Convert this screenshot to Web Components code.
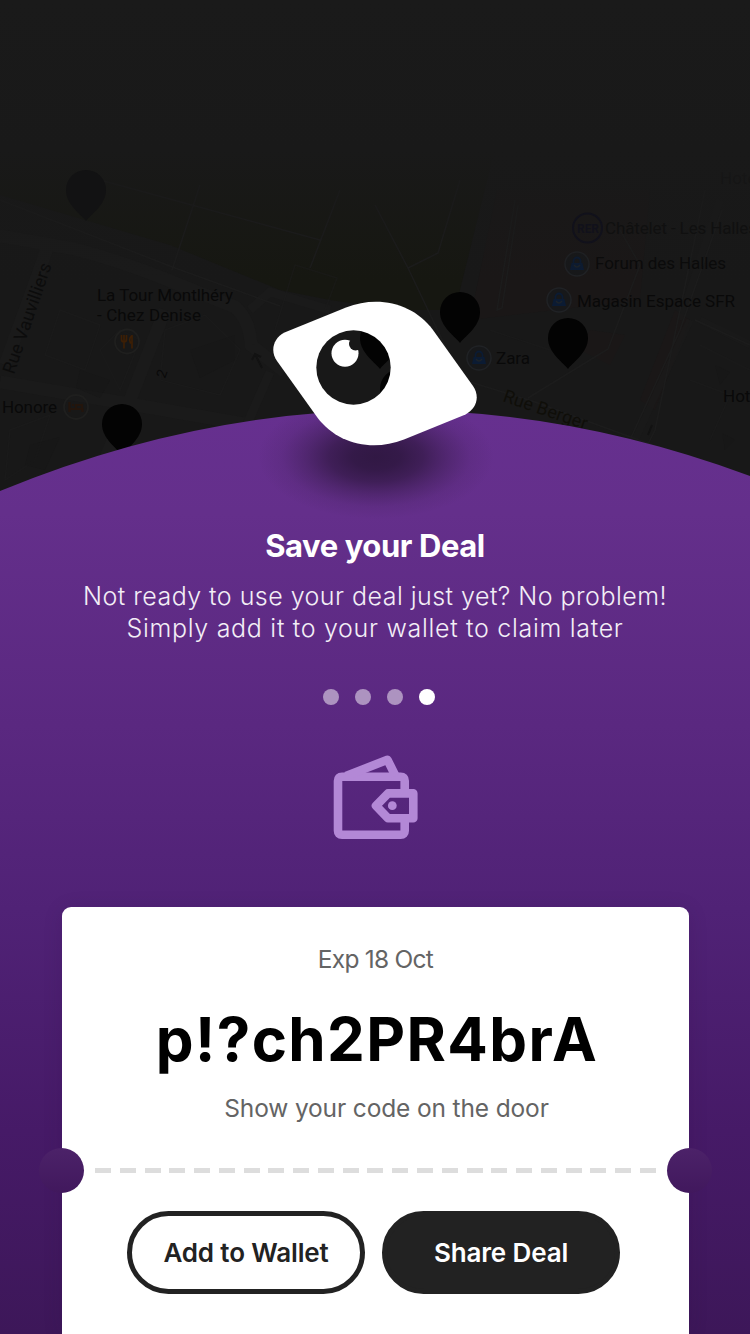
<!DOCTYPE html>
<html lang="en"><head><meta charset="utf-8"><title>Save your Deal</title>
<style>html,body{margin:0;background:#191919}body{font-family:Inter,"Liberation Sans",sans-serif;width:750px;height:1334px;overflow:hidden}</style></head>
<body>
<deal-screen>
  <deal-logo></deal-logo>
  <deal-intro>
    <span slot="title">Save your Deal</span>
    <span slot="line1">Not ready to use your deal just yet? No problem!</span>
    <span slot="line2">Simply add it to your wallet to claim later</span>
  </deal-intro>
  <page-dots count="4" active="4"></page-dots>
  <wallet-icon></wallet-icon>
  <deal-ticket>
    <span slot="expiry">Exp 18 Oct</span>
    <span slot="code">p!?ch2PR4brA</span>
    <span slot="hint">Show your code on the door</span>
    <pill-button slot="actions">Add to Wallet</pill-button>
    <pill-button slot="actions" solid>Share Deal</pill-button>
  </deal-ticket>
</deal-screen>
<script>
const define = (name, html, init) => customElements.define(name, class extends HTMLElement {
  constructor() { super(); this.attachShadow({mode: 'open'}).innerHTML = html; }
  connectedCallback() { if (init) init(this, this.shadowRoot); }
});

define('city-map', `<style>:host{display:block}svg{display:block}text{font-family:Roboto,sans-serif;font-size:17px;fill:#090909}</style>
<svg width="750" height="500" viewBox="0 0 750 500">
  <defs>
    <path id="pin" d="M0 0C-4 -6 -20 -16 -20 -31A20 20 0 0 1 20 -31C20 -16 4 -6 0 0Z"/>
    <g id="bag"><circle r="12" fill="#17181a" stroke="#202225" stroke-width="1.5"/><path d="M-5.500 -1H5.500L7 6H-7Z" fill="#0b1b33"/><path d="M-3.500 -1V-3A3.500 3.500 0 0 1 3.500 -3V-1" fill="none" stroke="#0b1b33" stroke-width="1.800"/><path d="M-3 1Q0 5 3 1" fill="none" stroke="#1d2329" stroke-width="1.300"/></g>
    <linearGradient id="fade" x2="0" y2="1"><stop offset="0" stop-color="#1a1a1a"/><stop offset=".3" stop-color="#191919"/><stop offset=".56" stop-color="#191919" stop-opacity="0"/></linearGradient>
  </defs>
  <rect width="750" height="500" fill="#181818"/>
  <path d="M0 140H497L455 310L400 310L330 300L280 290L170 245L0 195Z" fill="#161711"/>
  <path d="M497 190H650L640 300L470 320ZM590 330L625 335L610 365L580 350ZM675 310L690 320L655 410L640 400Z" fill="#1a1717"/>
  <g fill="none" stroke="#1a1a1a">
    <path d="M-5 235L70 248Q120 260 180 285L235 307Q250 320 251 345L285 372M50 240L36 280L5 365M0 382L130 404L250 425M165 310L130 400L105 460" stroke-width="13"/>
    <path d="M270 372L240 440M330 310L270 292L250 310" stroke-width="9"/>
    <path d="M690 320L635 440M680 320L720 200M700 320L750 345" stroke-width="7" opacity=".6"/>
  </g>
  <g fill="none" stroke="#1c1c1c" stroke-width="1.500">
    <path d="M0 200L175 268L280 306M200 185L172 270M100 180L320 240M340 190L310 268M375 205L408 268L447 350M408 268L438 253L460 180M515 200L497 310L502 308L518 205M470 382L535 402L680 455M528 398L608 349L640 265L620 230M705 190L655 430L640 460M722 210L680 330L630 440M695 320L750 345"/>
    <path d="M60 310L100 325L85 370L45 355ZM100 350L120 330L140 340L120 390ZM165 330L205 315L240 350L220 395L160 380ZM275 330L295 265L337 278L325 310M10 430L50 415L35 460L5 480ZM700 345L750 370M690 380L730 395L710 440M490 330L550 350" opacity=".5"/>
    <path d="M262 368L255 354M252 360L255 354L261 357M648 435L652 425" stroke="#121212" stroke-width="2"/>
  </g>
  <g fill="#151515" opacity=".5"><path d="M190 350L235 335V360L200 378ZM80 370L110 380L100 398L76 388ZM30 445L60 437L45 470L25 465ZM715 365L730 372L720 385ZM722 433L735 440L725 450Z"/></g>
  <use href="#bag" x="577" y="264"/><use href="#bag" x="559" y="300"/><use href="#bag" x="479" y="358"/>
  <g fill="none" stroke-width="1.800"><circle cx="127" cy="341.500" r="12" stroke="#1f1f1e"/><circle cx="76" cy="407" r="12" stroke="#1f1f1e"/></g>
  <path d="M124 341v7.500M121.500 335v4q0 3 2.500 3t2.500 -3v-4M124 335v6M132 335v13.500M131.500 336q-3 3 -1 7h1.500" fill="none" stroke="#3d1f05" stroke-width="1.700"/>
  <path d="M69.500 402v10M69.500 409h13v3M72 405h2M76 405h6v4h-6Z" fill="none" stroke="#23150c" stroke-width="2.200"/>
  <text x="595" y="269" textLength="131">Forum des Halles</text>
  <text x="577" y="307" textLength="158">Magasin Espace SFR</text>
  <text x="496" y="363.500" textLength="34">Zara</text>
  <text x="723" y="401.500">Hotel</text>
  <text x="720" y="184">Hotel</text>
  <text x="97" y="301" textLength="136">La Tour Montlhéry</text>
  <text x="97" y="321" textLength="104">- Chez Denise</text>
  <text x="2" y="412.500" textLength="55">Honore</text>
  <text transform="translate(165 379) rotate(-70)" style="font-size:14px">2</text>
  <text transform="translate(14 375) rotate(-71)" textLength="116" style="font-size:18px;fill:#0c0c0c">Rue Vauvilliers</text>
  <text transform="translate(502 401) rotate(19)" textLength="88" style="font-size:18px;fill:#0f0e09">Rue Berger</text>
  <rect width="750" height="500" fill="url(#fade)"/>
  <circle cx="587.500" cy="228" r="14.500" fill="none" stroke-width="2" stroke="#11111b"/>
  <text x="577" y="233" textLength="22" lengthAdjust="spacingAndGlyphs" style="font-size:13px;font-weight:700;fill:#11111b">RER</text>
  <text x="605" y="234" textLength="152" style="fill:#101010">Châtelet - Les Halles</text>
  <use href="#pin" x="86" y="221" fill="#121213"/>
  <g fill="#030303"><use href="#pin" x="460" y="343"/><use href="#pin" x="568" y="369"/><use href="#pin" x="122" y="455"/><use href="#pin" x="380" y="369"/><use href="#pin" x="400" y="420"/></g>
</svg>`);

define('purple-dome', `<style>:host{display:block}svg{display:block}</style>
<svg width="750" height="1334" viewBox="0 0 750 1334">
  <defs><linearGradient id="g" gradientUnits="userSpaceOnUse" x1="0" y1="411" x2="0" y2="1334">
    <stop offset="0" stop-color="#66308f"/><stop offset=".11" stop-color="#642f8b"/><stop offset=".34" stop-color="#5a2880"/><stop offset=".54" stop-color="#502276"/><stop offset=".78" stop-color="#461a67"/><stop offset="1" stop-color="#3d1759"/></linearGradient>
    <radialGradient id="s"><stop offset="0" stop-color="#311844"/><stop offset=".2" stop-color="#311844" stop-opacity=".94"/><stop offset=".4" stop-color="#331946" stop-opacity=".75"/><stop offset=".6" stop-color="#371b4b" stop-opacity=".43"/><stop offset=".8" stop-color="#3b1d50" stop-opacity=".14"/><stop offset="1" stop-color="#3b1d50" stop-opacity="0"/></radialGradient>
    <clipPath id="c"><path d="M0 491Q375 337 750 476V1334H0Z"/></clipPath></defs>
  <path d="M0 491Q375 337 750 476V1334H0Z" fill="url(#g)"/>
  <ellipse cx="376" cy="457" rx="118" ry="62" fill="url(#s)" clip-path="url(#c)"/>
</svg>`);

define('deal-logo', `<style>:host{display:block;width:206px;height:146px}svg{display:block}</style>
<svg width="206" height="146" viewBox="272 300 206 146">
  <mask id="m" maskUnits="userSpaceOnUse" x="272" y="300" width="206" height="146"><rect x="272" y="300" width="206" height="146" fill="#fff"/><circle cx="353.500" cy="367.500" r="37.200"/><circle cx="345" cy="353.300" r="13.500" fill="#fff"/><circle cx="355.500" cy="344" r="6.500"/></mask>
  <path mask="url(#m)" fill="#fff" d="M284.500 332.500L346 307.500C378 295 413 303 433 330L473 386C480 396 477 408.500 465.500 414.500L404 439.500C372 452 337 444 317 417L277 361C270 351 273 338.500 284.500 332.500Z"/>
</svg>`);

define('deal-intro', `<style>:host{display:block;color:#fff;text-align:center}
h1{margin:0;font-size:31px;line-height:40px;font-weight:700;letter-spacing:-.42px}
p{margin:14px 0 0;font-size:25px;line-height:32px;font-weight:330;color:#f3eef6}
p span{display:block;white-space:nowrap}.a{letter-spacing:.47px}.b{letter-spacing:.7px}</style>
<h1><slot name="title"></slot></h1><p><span class="a"><slot name="line1"></slot></span><span class="b"><slot name="line2"></slot></span></p>`);

define('page-dots', `<style>:host{display:flex;gap:16px}i{width:16px;height:16px;border-radius:50%;background:#ad93c0}i.on{background:#fff}</style>`,
  (el, root) => { for (let n = 1; n <= +el.getAttribute('count'); n++) { const i = document.createElement('i'); if (n == el.getAttribute('active')) i.className = 'on'; root.append(i); } });

define('wallet-icon', `<style>:host{display:block;width:86px;height:86px}svg{display:block}</style>
<svg width="86" height="86" viewBox="333 754 86 86" fill="none" stroke="#b388d6" stroke-width="8.600" stroke-linejoin="round">
  <path d="M404.700 791V780.700Q404.700 776.700 400.700 776.700H342Q338 776.700 338 780.700V830.700Q338 834.700 342 834.700H400.700Q404.700 834.700 404.700 830.700V820"/>
  <path d="M346 776L387.500 759.800L395.500 776"/>
  <path d="M413.300 793.400H388L376 805.800L388 818.200H413.300Z"/>
  <circle cx="392.300" cy="805.700" r="4.400" fill="#b388d6" stroke="none"/>
</svg>`);

define('deal-ticket', `<style>
:host{display:flex;flex-direction:column;align-items:center;position:relative;width:627px;height:427px;box-sizing:border-box;padding-top:36px;background:#fff;border-radius:9px 9px 0 0;box-shadow:0 2px 20px rgba(35,10,55,.12)}
.e{font-size:24.5px;line-height:32px;color:#646464;letter-spacing:-.75px}
.c{font-size:60px;line-height:72px;font-weight:700;color:#000;margin:28px 0 0 3px;letter-spacing:1.4px}
.h{font-size:24.5px;line-height:32px;color:#646464;font-weight:400;margin:17px 0 0 22px;letter-spacing:-.14px}
.tear{width:561px;height:5px;margin-top:44px;background:repeating-linear-gradient(90deg,#ddd 0 16px,transparent 16px 24.77px)}
.row{display:flex;gap:17px;margin:38px 4px 0 0}
.n{position:absolute;top:241px;width:45px;height:45px;border-radius:50%;background:linear-gradient(#4c2269,#41185d)}.l{left:-23px}.r{right:-23px}
</style><div class="e"><slot name="expiry"></slot></div><div class="c"><slot name="code"></slot></div><div class="h"><slot name="hint"></slot></div><div class="tear"></div><div class="row"><slot name="actions"></slot></div><div class="n l"></div><div class="n r"></div>`);

define('pill-button', `<style>:host{display:block}button{display:block;width:238px;height:83px;box-sizing:border-box;padding:0;border:5px solid #222;border-radius:42px;background:#fff;color:#222;font:580 26px/1 Inter,"Liberation Sans",sans-serif;letter-spacing:-.14px}:host([solid]) button{background:#222;color:#fff}</style><button><slot></slot></button>`);

define('deal-screen', `<style>
:host{display:block;position:relative;width:750px;height:1334px;overflow:hidden;background:#181818}
city-map,purple-dome{position:absolute;left:0;top:0}
.flow{position:relative;display:flex;flex-direction:column;align-items:center;padding-top:300px}
::slotted(deal-intro){margin-top:80px}
::slotted(page-dots){margin:45px 0 0 8px}
::slotted(wallet-icon){margin:49px 0 0 2px}
::slotted(deal-ticket){margin:67px 0 0 1px}
</style><city-map></city-map><purple-dome></purple-dome><div class="flow"><slot></slot></div>`);
</script>
</body></html>
